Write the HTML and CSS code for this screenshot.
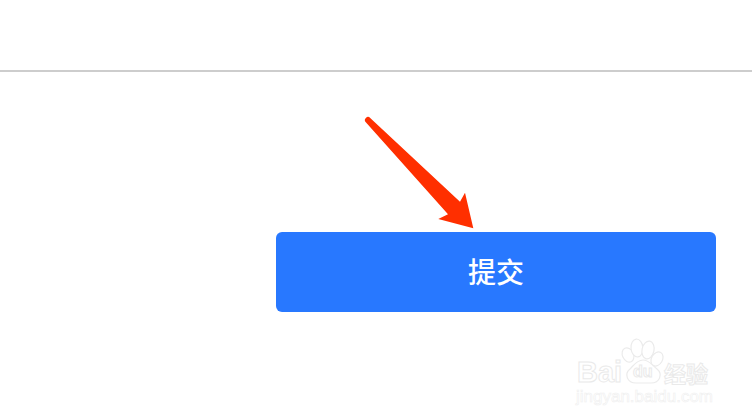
FILE: index.html
```html
<!DOCTYPE html>
<html lang="zh-CN">
<head>
  <meta charset="UTF-8">
  <title>提交</title>
  <link rel="stylesheet" href="styles.css">
</head>
<body>
  <header class="top-bar"></header>
  <main class="form-footer">
    <button class="submit">提交</button>
  </main>

  <!-- red annotation arrow -->
  <svg class="arrow" width="752" height="420" viewBox="0 0 752 420">
    <path d="M365.8 122.2 A3 3 0 0 1 370.2 118 L460 201.7 L465 192.7 L473.3 228.3 L438.3 219 L448 214.3 Z" fill="#ff2f00"/>
  </svg>

  <!-- watermark -->
  <div class="watermark">
    <svg class="paw" width="60" height="50" viewBox="0 0 60 50">
      <g fill="#fff" stroke="#ebebeb" stroke-width="1.2">
        <ellipse cx="9" cy="17" rx="5.5" ry="7.5" transform="rotate(-25 9 17)"/>
        <ellipse cx="18" cy="10" rx="6" ry="9" transform="rotate(-5 18 10)"/>
        <ellipse cx="29" cy="12" rx="6" ry="9" transform="rotate(12 29 12)"/>
        <ellipse cx="38" cy="21" rx="5.5" ry="7.5" transform="rotate(30 38 21)"/>
        <path d="M24 22 C18 22 15 27 11 31 C5 36 8 45 17 45 L32 45 C41 45 44 36 38 31 C33 27 30 22 24 22 Z"/>
      </g>
    </svg>
    <div class="brand">
      <span class="bai">Bai</span><span class="du">du</span><span class="jy">经验</span>
    </div>
    <div class="site">jingyan.baidu.com</div>
  </div>
</body>
</html>
```

FILE: styles.css
```css
body {
  margin: 0;
  background: #fff;
  font-family: "Noto Sans CJK SC", "Liberation Sans", sans-serif;
  overflow: hidden;
}
.top-bar {
  height: 70px;
  border-bottom: 2px solid #cdcdcd;
}
.form-footer {
  display: flex;
  justify-content: flex-end;
  padding: 160px 36px 0 0;
}
.submit {
  width: 440px;
  height: 80px;
  border: none;
  border-radius: 6px;
  background: #2878ff;
  color: #fff;
  font-family: inherit;
  font-size: 28px;
  font-weight: 500;
  padding: 0 0 2px;
}
.arrow {
  position: absolute;
  top: 0;
  left: 0;
}
/* Watermark */
.watermark {
  position: absolute;
  left: 574px;
  top: 338px;
  width: 160px;
  height: 70px;
}
.paw {
  position: absolute;
  left: 45px;
  top: 0;
}
.brand {
  position: absolute;
  top: 16px;
  left: 3px;
  white-space: nowrap;
  color: #fff;
  -webkit-text-stroke: 1px #eaeaea;
  font-family: "Liberation Sans", sans-serif;
  line-height: 36px;
}
.bai {
  font-size: 29px;
  font-weight: 700;
}
.du {
  position: absolute;
  left: 56px;
  top: 0;
  font-size: 16px;
  font-weight: 700;
}
.jy {
  position: absolute;
  left: 87px;
  top: 0;
  font-family: "Noto Sans CJK SC", sans-serif;
  font-size: 22px;
  font-weight: 700;
}
.site {
  position: absolute;
  top: 49px;
  left: 2px;
  white-space: nowrap;
  color: #fff;
  -webkit-text-stroke: 0.6px #efefef;
  font-family: "Liberation Sans", sans-serif;
  font-size: 17px;
  line-height: 20px;
}
```
